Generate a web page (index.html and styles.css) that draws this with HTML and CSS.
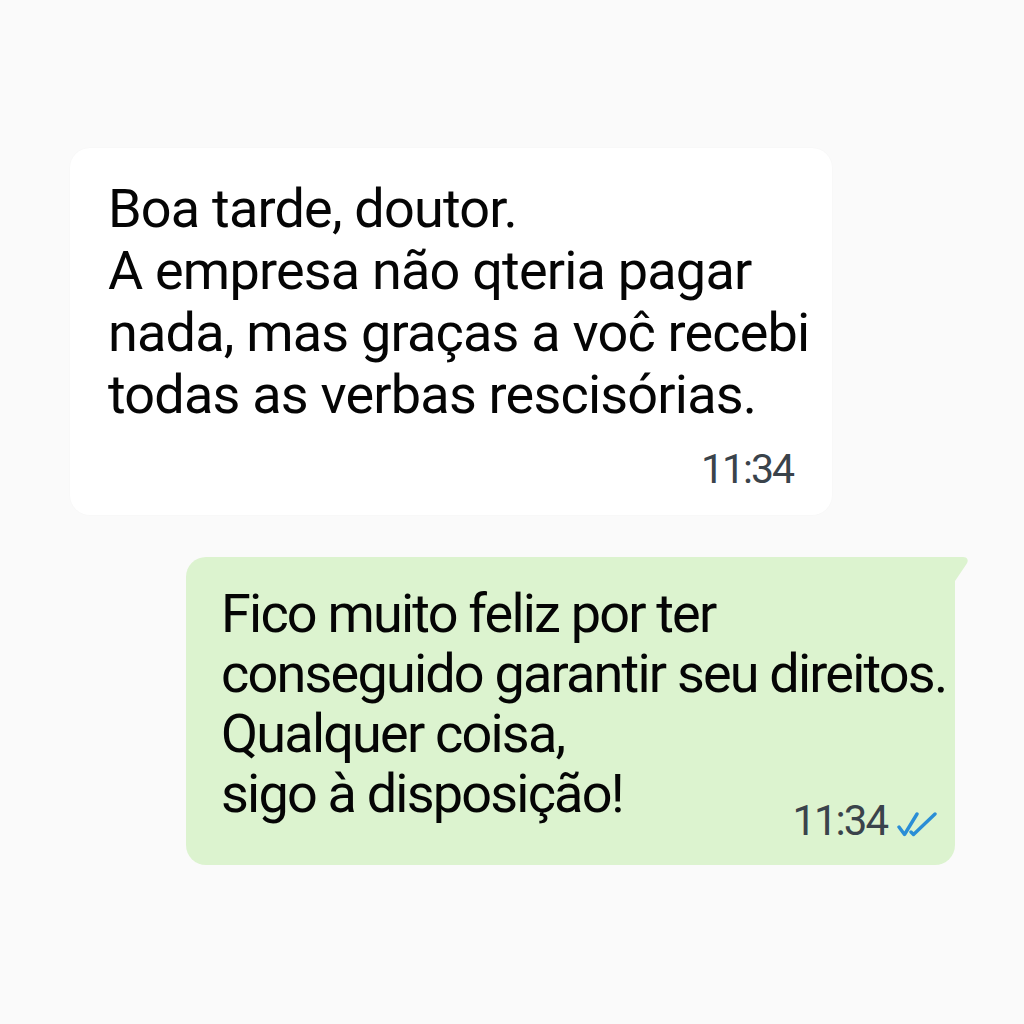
FILE: index.html
```html
<!DOCTYPE html>
<html lang="pt">
<head>
<meta charset="utf-8">
<title>Conversa</title>
<link rel="stylesheet" href="styles.css">
</head>
<body>
<main class="chat">
  <div class="bubble bubble-in">
    <p class="msg">Boa tarde, doutor.<br>A empresa não qteria pagar<br>nada, mas graças a voĉ recebi<br>todas as verbas rescisórias.</p>
    <div class="meta meta-in">11:34</div>
  </div>
  <div class="bubble bubble-out">
    <p class="msg msg-out">Fico muito feliz por ter<br>conseguido garantir seu direitos.<br>Qualquer coisa,</p>
    <div class="last-row">
      <span class="msg-out last-line">sigo à disposição!</span>
      <span class="meta meta-out">11:34
        <svg class="ticks" width="40" height="25" viewBox="0 0 40 25" aria-hidden="true">
          <path d="M2 15 L7.5 22.5 L20 2" fill="none" stroke="#2a8ed6" stroke-width="3.4" stroke-linecap="round" stroke-linejoin="round"/>
          <path d="M14 20 L16.5 22.5 L38 2" fill="none" stroke="#2a8ed6" stroke-width="3.4" stroke-linecap="round" stroke-linejoin="round"/>
        </svg>
      </span>
    </div>
    <svg class="tail" width="16" height="30" viewBox="0 0 16 30" aria-hidden="true">
      <path d="M0 0 H10 C14.5 0 16 3.5 13.5 7 L0 27 Z" fill="#dcf3cf"/>
    </svg>
  </div>
</main>
</body>
</html>
```

FILE: styles.css
```css
html, body {
  margin: 0;
  padding: 0;
}

body {
  background: #fafafa;
  font-family: Roboto, "Noto Sans", "Liberation Sans", sans-serif;
  color: #050505;
  width: 1024px;
  height: 1024px;
  overflow: hidden;
}

.chat {
  display: flex;
  flex-direction: column;
  padding-top: 148px;
}

.bubble {
  box-sizing: border-box;
  border-radius: 20px;
}

.bubble-in {
  margin-left: 70px;
  width: 762px;
  height: 367px;
  background: #ffffff;
  padding: 30px 39px 0 38px;
  box-shadow: 0 0 2px rgba(0, 0, 0, 0.03);
}

.msg {
  margin: 0;
  font-size: 54px;
  line-height: 62px;
  white-space: nowrap;
  letter-spacing: -0.8px;
}

.meta {
  color: #3a434b;
  font-size: 41px;
  line-height: 41px;
  white-space: nowrap;
  letter-spacing: -2px;
}

.meta-in {
  margin-top: 23px;
  text-align: right;
}

.bubble-out {
  position: relative;
  margin-top: 42px;
  margin-left: 186px;
  width: 769px;
  height: 308px;
  background: #dcf3cf;
  border-top-right-radius: 0;
  padding: 27px 18px 0 35px;
}

.msg-out {
  font-size: 54px;
  line-height: 60px;
  letter-spacing: -1.8px;
}

.last-row {
  display: flex;
  justify-content: space-between;
  align-items: flex-start;
  white-space: nowrap;
}

.last-line {
  display: block;
}

.meta-out {
  display: flex;
  align-items: flex-end;
  gap: 10px;
  margin-top: 36px;
  font-size: 42px;
  line-height: 42px;
}

.ticks {
  display: block;
  margin-bottom: 5px;
}

.tail {
  position: absolute;
  top: 0;
  right: -14px;
  display: block;
}
```
